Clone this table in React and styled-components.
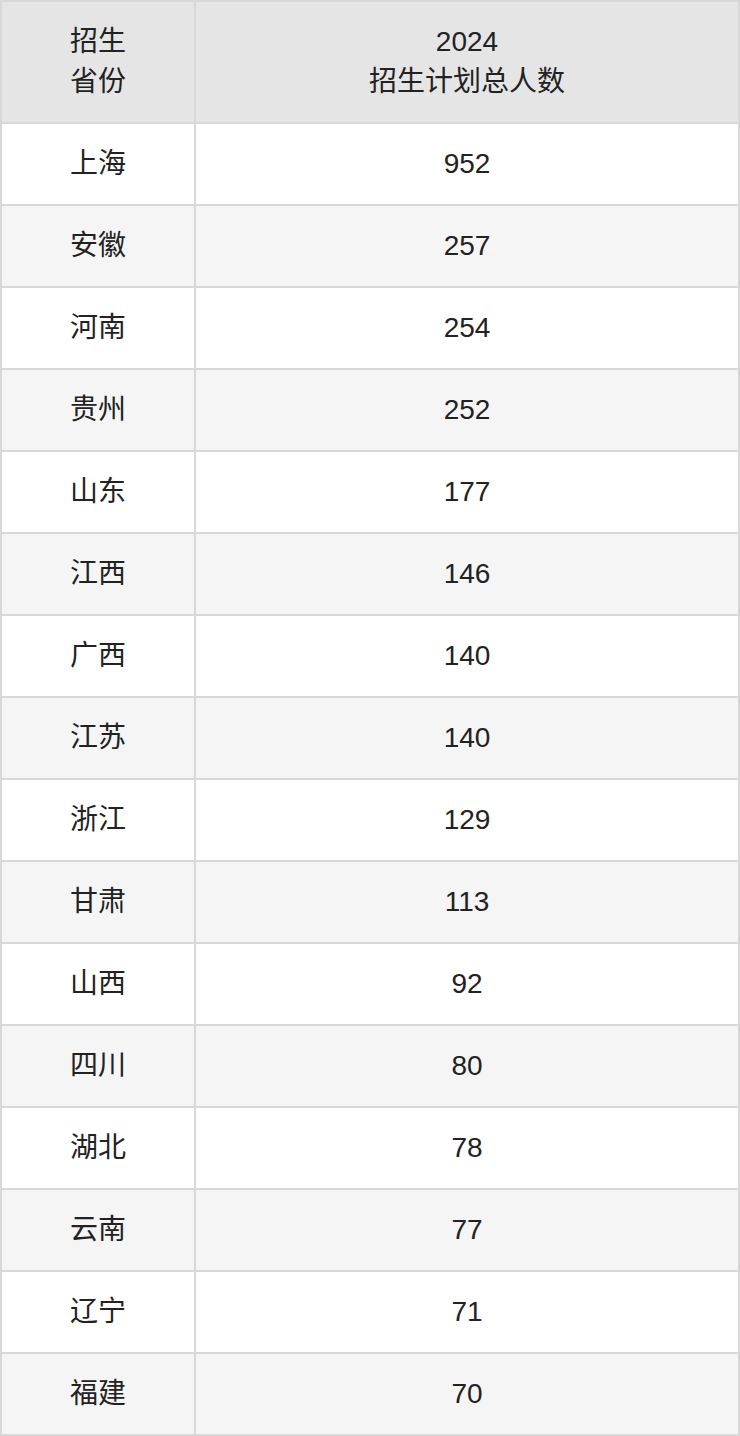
import React from 'react';
import styled, { createGlobalStyle } from 'styled-components';

const GlobalStyle = createGlobalStyle`
  body {
    margin: 0;
    background: #fff;
    font-family: "Liberation Sans", "Noto Sans CJK SC", sans-serif;
    color: #222;
  }
`;

const Table = styled.table`
  width: 740px;
  border-spacing: 0;
  border-collapse: separate;
  border-top: 2px solid #d8d8d8;
  border-left: 2px solid #d8d8d8;
  table-layout: fixed;
  font-size: 28px;
  line-height: 40px;
`;

const HeadCell = styled.th`
  height: 120px;
  padding: 0;
  font-weight: 400;
  text-align: center;
  vertical-align: middle;
  background: #e5e5e5;
  border-right: 2px solid #d8d8d8;
  border-bottom: 2px solid #d8d8d8;
  width: ${({ $w }) => ($w ? `${$w}px` : 'auto')};
`;

const Row = styled.tr`
  background: ${({ $alt }) => ($alt ? '#f5f5f5' : '#fff')};
`;

const Cell = styled.td`
  height: 80px;
  padding: 0;
  text-align: center;
  vertical-align: middle;
  border-right: 2px solid #d8d8d8;
  border-bottom: 2px solid #d8d8d8;
`;

const rows = [
  ['上海', 952],
  ['安徽', 257],
  ['河南', 254],
  ['贵州', 252],
  ['山东', 177],
  ['江西', 146],
  ['广西', 140],
  ['江苏', 140],
  ['浙江', 129],
  ['甘肃', 113],
  ['山西', 92],
  ['四川', 80],
  ['湖北', 78],
  ['云南', 77],
  ['辽宁', 71],
  ['福建', 70],
];

const App = () => (
  <>
    <GlobalStyle />
    <Table>
      <thead>
        <tr>
          <HeadCell $w={192}>
            招生
            <br />
            省份
          </HeadCell>
          <HeadCell>
            2024
            <br />
            招生计划总人数
          </HeadCell>
        </tr>
      </thead>
      <tbody>
        {rows.map(([province, total], i) => (
          <Row key={province} $alt={i % 2 === 1}>
            <Cell>{province}</Cell>
            <Cell>{total}</Cell>
          </Row>
        ))}
      </tbody>
    </Table>
  </>
);

export default App;
